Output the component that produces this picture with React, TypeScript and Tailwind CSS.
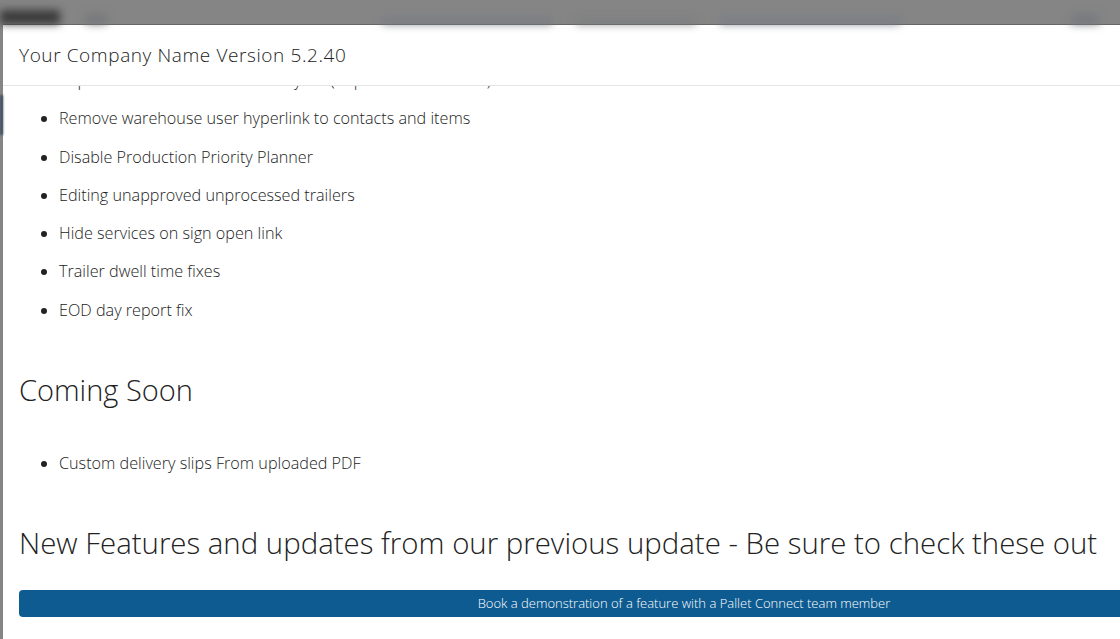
import React, { useEffect, useRef } from "react";

const fixes = [
  "Repeat a transaction from history list (duplicate items error)",
  "Remove warehouse user hyperlink to contacts and items",
  "Disable Production Priority Planner",
  "Editing unapproved unprocessed trailers",
  "Hide services on sign open link",
  "Trailer dwell time fixes",
  "EOD day report fix",
];

const comingSoon = ["Custom delivery slips From uploaded PDF"];

const App: React.FC = () => {
  const bodyRef = useRef<HTMLDivElement>(null);

  useEffect(() => {
    // modal body is scrolled a little so the first fix sits under the header
    if (bodyRef.current) bodyRef.current.scrollTop = 25;
  }, []);

  return (
    <div
      className="relative h-[639px] w-[1120px] overflow-hidden bg-[#858585] text-[#2a2a2a]"
      style={{ fontFamily: "'Open Sans', Lato, sans-serif" }}
    >
      {/* blurred page behind the backdrop */}
      <div className="flex h-[24px] items-end gap-6 blur-[4px]">
        <div className="h-[14px] w-[60px] bg-[#3a3a3a]" />
        <div className="h-[10px] w-[24px] rounded-full bg-[#77787c]" />
        <div className="ml-[250px] h-[6px] w-[170px] bg-[#787b84]" />
        <div className="h-[5px] w-[120px] bg-[#7b7c7e]" />
        <div className="h-[6px] w-[180px] bg-[#777c88]" />
        <div className="ml-auto mr-[20px] h-[10px] w-[30px] rounded-t-full bg-[#75787e]" />
      </div>

      <div className="absolute left-0 top-[95px] h-[40px] w-[3px] bg-[#3a4d5e] blur-[1px]" />

      {/* modal */}
      <div className="ml-[3px] flex h-[615px] w-[1362px] flex-col border-t border-[#666] bg-white">
        <div className="flex h-[61px] shrink-0 items-center border-b border-[#e5e5e5] px-4">
          <h4 className="text-[19px] font-light tracking-[0.6px] text-[#222]">
            Your Company Name Version 5.2.40
          </h4>
        </div>

        <div ref={bodyRef} className="flex-1 overflow-hidden px-4">
          <ul className="list-disc pl-10 text-[16.2px] font-light text-[#222]">
            {fixes.map((f) => (
              <li key={f} className="leading-[38.3px]">
                {f}
              </li>
            ))}
          </ul>

          <h2 className="mt-[44px] text-[29px] font-light leading-[33px] text-[#222]">
            Coming Soon
          </h2>

          <ul className="mt-[38px] list-disc pl-10 text-[16.2px] font-light text-[#222]">
            {comingSoon.map((c) => (
              <li key={c} className="leading-[38px]">
                {c}
              </li>
            ))}
          </ul>

          <h2 className="mt-[45px] text-[29.4px] font-light leading-[33px] text-[#222]">
            New Features and updates from our previous update - Be sure to check these out
          </h2>

          <button className="mt-[30px] block h-[27px] w-full rounded-[4px] bg-[#0e5b91] text-center text-[13px] font-light text-white">
            Book a demonstration of a feature with a Pallet Connect team member
          </button>

          <div className="h-[200px]" />
        </div>
      </div>
    </div>
  );
};

export default App;
